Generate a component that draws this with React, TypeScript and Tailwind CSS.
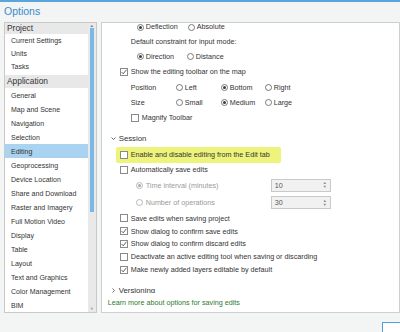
const font = "font-['Liberation_Sans',Arial,sans-serif]";

const projectItems = ['Current Settings', 'Units', 'Tasks'];
const appItems = [
  'General',
  'Map and Scene',
  'Navigation',
  'Selection',
  'Editing',
  'Geoprocessing',
  'Device Location',
  'Share and Download',
  'Raster and Imagery',
  'Full Motion Video',
  'Display',
  'Table',
  'Layout',
  'Text and Graphics',
  'Color Management',
  'BIM',
];

function Radio({ checked = false, disabled = false }: Readonly<{ checked?: boolean; disabled?: boolean }>) {
  return (
    <span
      className={`w-[7px] h-[7px] shrink-0 rounded-full border bg-white flex items-center justify-center ${
        disabled ? 'border-[#b8b8b8]' : 'border-[#7a7a7a]'
      }`}
    >
      {checked && (
        <span className={`w-[3px] h-[3px] rounded-full ${disabled ? 'bg-[#a8a8a8]' : 'bg-[#3c3c3c]'}`} />
      )}
    </span>
  );
}

function Check({ checked = false }: Readonly<{ checked?: boolean }>) {
  return (
    <span className="w-[8px] h-[8px] shrink-0 border border-[#8a8a8a] bg-white flex items-center justify-center">
      {checked && (
        <svg width="6" height="6" viewBox="0 0 6 6">
          <path d="M0.6 3.1 L2.2 4.8 L5.4 0.8" fill="none" stroke="#333" strokeWidth="0.8" />
        </svg>
      )}
    </span>
  );
}

function Option({ label, checked, w }: Readonly<{ label: string; checked?: boolean; w: string }>) {
  return (
    <div className={`flex items-center gap-[2px] ${w}`}>
      <Radio checked={checked} />
      <span>{label}</span>
    </div>
  );
}

function CheckRow({ label, checked, h = 'h-[13px]' }: Readonly<{ label: string; checked?: boolean; h?: string }>) {
  return (
    <div className={`flex items-center gap-[3px] pl-[18px] ${h}`}>
      <Check checked={checked} />
      <span>{label}</span>
    </div>
  );
}

function Spin({ value }: Readonly<{ value: string }>) {
  return (
    <div className="w-[60px] h-[13px] border border-[#c9c9c9] bg-[#f1f1f1] flex items-center justify-between pl-[3px] pr-[3px] text-[#555]">
      <span>{value}</span>
      <span className="flex flex-col text-[4px] leading-[4px] text-[#888]">
        <span>▲</span>
        <span>▼</span>
      </span>
    </div>
  );
}

function Chevron({ open }: Readonly<{ open: boolean }>) {
  return (
    <svg width="5" height="5" viewBox="0 0 5 5" className={open ? '' : '-rotate-90'}>
      <path d="M0.5 1.5 L2.5 3.5 L4.5 1.5" fill="none" stroke="#444" strokeWidth="0.8" />
    </svg>
  );
}

function Sidebar() {
  return (
    <div className="ml-[4px] w-[99px] border border-[#c9c9c9] bg-white flex overflow-hidden">
      <div className="flex-1 flex flex-col text-[7px] leading-[9px] text-[#333]">
        <div className="h-[12px] bg-[#e8e8e8] pl-[2px] flex items-center text-[8.4px]">Project</div>
        {projectItems.map((it) => (
          <div key={it} className="h-[14px] pl-[6px] flex items-center">
            {it}
          </div>
        ))}
        <div className="h-[14px] mt-[2px] bg-[#e8e8e8] pl-[2px] flex items-center text-[8.4px]">Application</div>
        {appItems.map((it) => (
          <div
            key={it}
            className={`h-[14px] shrink-0 pl-[6px] flex items-center ${it === 'Editing' ? 'bg-[#a9d3f0]' : ''}`}
          >
            {it}
          </div>
        ))}
      </div>
      <div className="w-[8px] bg-[#e9e9e9] flex flex-col items-center">
        <span className="h-[5px] text-[4px] leading-[5px] text-[#777]">▲</span>
        <span className="w-[4px] h-[184px] bg-[#7cb8e6]" />
        <span className="flex-1" />
        <span className="h-[6px] text-[4px] leading-[5px] text-[#999]">▼</span>
      </div>
    </div>
  );
}

function EditingPanel() {
  return (
    <div className="ml-[4px] w-[320px] border border-[#cfcfcf] bg-white flex flex-col text-[7.2px] leading-[9px] text-[#333]">
      <div className="h-[270px] overflow-hidden">
        <div className="flex flex-col">
          <div className="h-[11px] pl-[35px] flex items-start">
            <div className="h-[8px] leading-[8px] flex items-center">
              <Option label="Deflection" checked w="w-[51px]" />
              <Option label="Absolute" w="w-[60px]" />
            </div>
          </div>
          <div className="h-[15px] pl-[29px] flex items-center">Default constraint for input mode:</div>
          <div className="h-[15px] pl-[35px] flex items-center">
            <Option label="Direction" checked w="w-[50px]" />
            <Option label="Distance" w="w-[60px]" />
          </div>
          <CheckRow label="Show the editing toolbar on the map" checked h="h-[15px]" />
          <div className="h-[16px] pl-[29px] flex items-center">
            <span className="w-[45px]">Position</span>
            <Option label="Left" w="w-[45px]" />
            <Option label="Bottom" checked w="w-[44px]" />
            <Option label="Right" w="w-[40px]" />
          </div>
          <div className="h-[15px] pl-[29px] flex items-center">
            <span className="w-[45px]">Size</span>
            <Option label="Small" w="w-[45px]" />
            <Option label="Medium" checked w="w-[44px]" />
            <Option label="Large" w="w-[40px]" />
          </div>
          <div className="h-[15px] pl-[29px] flex items-center gap-[3px]">
            <Check />
            <span>Magnify Toolbar</span>
          </div>
          <div className="h-[16px] mt-[5px] pl-[9px] flex items-center gap-[3px] text-[7.8px]">
            <Chevron open />
            <span>Session</span>
          </div>
          <div className="h-[17px] pl-[14px] flex items-center">
            <div className="w-[165px] h-[16px] bg-[#eef37c] rounded-[2px] pl-[4px] flex items-center gap-[3px]">
              <Check />
              <span>Enable and disable editing from the Edit tab</span>
            </div>
          </div>
          <CheckRow label="Automatically save edits" h="h-[13px]" />
          <div className="h-[18px] pl-[34px] flex items-center">
            <div className="w-[135px] flex items-center gap-[3px] text-[#9a9a9a]">
              <Radio checked disabled />
              <span>Time interval (minutes)</span>
            </div>
            <Spin value="10" />
          </div>
          <div className="h-[17px] pl-[34px] flex items-center">
            <div className="w-[135px] flex items-center gap-[3px] text-[#9a9a9a]">
              <Radio disabled />
              <span>Number of operations</span>
            </div>
            <Spin value="30" />
          </div>
          <CheckRow label="Save edits when saving project" h="h-[14px]" />
          <CheckRow label="Show dialog to confirm save edits" checked h="h-[12px]" />
          <CheckRow label="Show dialog to confirm discard edits" checked h="h-[13px]" />
          <CheckRow label="Deactivate an active editing tool when saving or discarding" h="h-[13px]" />
          <CheckRow label="Make newly added layers editable by default" checked h="h-[13px]" />
          <div className="h-[14px] mt-[7px] pl-[9px] flex items-center gap-[3px] text-[7.8px]">
            <Chevron open={false} />
            <span>Versioning</span>
          </div>
        </div>
      </div>
      <div className="h-[19px] pl-[6px] flex items-center text-[#2f7a2c]">
        Learn more about options for saving edits
      </div>
    </div>
  );
}

export default function App() {
  return (
    <div className={`w-[400px] h-[332px] overflow-hidden bg-[#f3f4f4] border-t-2 border-[#5aa6dc] flex flex-col ${font}`}>
      <div className="h-[20px] shrink-0 pl-[4px] flex items-center text-[10.5px] text-[#3b8bd0]">Options</div>
      <div className="h-[291px] shrink-0 flex">
        <Sidebar />
        <EditingPanel />
      </div>
      <div className="flex-1 flex justify-end items-end">
        <div className="w-[30px] h-[10px] -mr-[12px] border border-b-0 border-[#4e9ee0] bg-white" />
      </div>
    </div>
  );
}
